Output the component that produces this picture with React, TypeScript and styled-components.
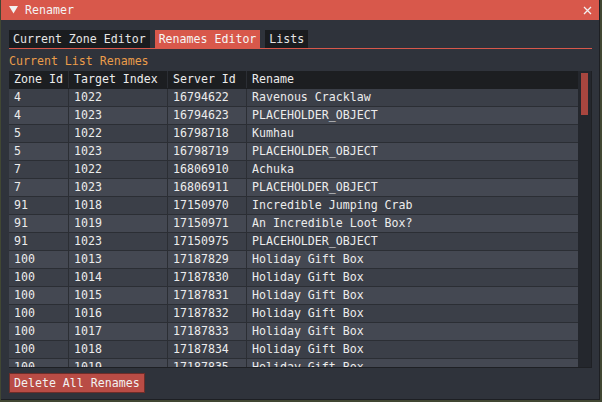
import styled, { createGlobalStyle } from 'styled-components'

const rows = [
  ['4', '1022', '16794622', 'Ravenous Cracklaw'],
  ['4', '1023', '16794623', 'PLACEHOLDER_OBJECT'],
  ['5', '1022', '16798718', 'Kumhau'],
  ['5', '1023', '16798719', 'PLACEHOLDER_OBJECT'],
  ['7', '1022', '16806910', 'Achuka'],
  ['7', '1023', '16806911', 'PLACEHOLDER_OBJECT'],
  ['91', '1018', '17150970', 'Incredible Jumping Crab'],
  ['91', '1019', '17150971', 'An Incredible Loot Box?'],
  ['91', '1023', '17150975', 'PLACEHOLDER_OBJECT'],
  ['100', '1013', '17187829', 'Holiday Gift Box'],
  ['100', '1014', '17187830', 'Holiday Gift Box'],
  ['100', '1015', '17187831', 'Holiday Gift Box'],
  ['100', '1016', '17187832', 'Holiday Gift Box'],
  ['100', '1017', '17187833', 'Holiday Gift Box'],
  ['100', '1018', '17187834', 'Holiday Gift Box'],
  ['100', '1019', '17187835', 'Holiday Gift Box'],
]

const tabs = ['Current Zone Editor', 'Renames Editor', 'Lists']
const columns = ['Zone Id', 'Target Index', 'Server Id', 'Rename']

export default function App() {
  return (
    <>
      <Global />
      <Window>
        <TitleBar>
          <svg width='9' height='8' viewBox='0 0 9 8'>
            <polygon points='0,0 9,0 4.5,7.5' fill='#f2f2f2' />
          </svg>
          <span>Renamer</span>
          <svg className='close' width='9' height='9' viewBox='0 0 9 9'>
            <path d='M1 1 L8 8 M8 1 L1 8' stroke='#f2f2f2' strokeWidth='1.3' />
          </svg>
        </TitleBar>
        <Body>
          <TabBar>
            {tabs.map((t) => (
              <Tab key={t} $active={t === 'Renames Editor'}>
                {t}
              </Tab>
            ))}
          </TabBar>
          <Heading>Current List Renames</Heading>
          <TableFrame>
            <TableBody>
              <Row $header>
                {columns.map((c) => (
                  <Cell key={c}>{c}</Cell>
                ))}
              </Row>
              {rows.map((r, i) => (
                <Row key={i} $alt={i % 2 === 1}>
                  {r.map((v, j) => (
                    <Cell key={j}>{v}</Cell>
                  ))}
                </Row>
              ))}
            </TableBody>
            <ScrollTrack>
              <ScrollGrab />
            </ScrollTrack>
          </TableFrame>
          <Button>Delete All Renames</Button>
        </Body>
      </Window>
    </>
  )
}

const Global = createGlobalStyle`
  html, body {
    margin: 0;
    padding: 0;
    background: #414733;
    width: 602px;
    height: 402px;
    overflow: hidden;
  }
  * {
    box-sizing: border-box;
  }
`

const Window = styled.div`
  margin-left: 1px;
  width: 599px;
  height: 400px;
  background: #2f333b;
  border-right: 1px solid #1d1f23;
  border-bottom: 1px solid #1d1f23;
  font-family: 'DejaVu Sans Mono', 'Liberation Mono', monospace;
  font-size: 11.6px;
  color: #ececec;
  display: flex;
  flex-direction: column;
`

const TitleBar = styled.div`
  height: 20px;
  background: #d8584b;
  display: flex;
  align-items: center;
  padding: 0 7px 0 8px;
  svg {
    flex: none;
  }
  span {
    margin-left: 7px;
    line-height: 20px;
    color: #f4f4f4;
  }
  .close {
    margin-left: auto;
  }
`

const Body = styled.div`
  flex: 1;
  padding: 10px 7px 0 8px;
  display: flex;
  flex-direction: column;
`

const TabBar = styled.div`
  display: flex;
  gap: 5px;
  border-bottom: 1px solid #d8584b;
`

const Tab = styled.div<{ $active?: boolean }>`
  height: 18px;
  line-height: 18px;
  padding: 0 4px;
  white-space: nowrap;
  background: ${(p) => (p.$active ? '#d8584b' : '#1a1c1f')};
  color: ${(p) => (p.$active ? '#f6f6f6' : '#e6e6e6')};
`

const Heading = styled.div`
  margin-top: 3px;
  height: 18px;
  line-height: 18px;
  color: #eb9d4a;
`

const TableFrame = styled.div`
  margin-top: 1px;
  height: 297px;
  display: flex;
  border-bottom: 1px solid #1e2024;
`

const TableBody = styled.div`
  flex: 1;
  overflow: hidden;
`

const Row = styled.div<{ $header?: boolean; $alt?: boolean }>`
  display: grid;
  grid-template-columns: 59px 99px 79px 1fr;
  height: 18px;
  line-height: 17px;
  border-bottom: 1px solid ${(p) => (p.$header ? '#1c1e21' : '#2b2e34')};
  background: ${(p) => (p.$header ? '#1c1e21' : p.$alt ? '#444852' : '#3b3f48')};
`

const Cell = styled.div`
  padding-left: 5px;
  white-space: nowrap;
  overflow: hidden;
  border-left: 1px solid #2b2e34;
  &:first-child {
    border-left: none;
  }
`

const ScrollTrack = styled.div`
  width: 14px;
  flex: none;
  background: #24272d;
  padding: 2px 3px;
  border-right: 1px solid #1e2024;
`

const ScrollGrab = styled.div`
  height: 42px;
  background: #a8463f;
`

const Button = styled.div`
  margin-top: 5px;
  align-self: flex-start;
  height: 20px;
  line-height: 18px;
  padding: 0 4px;
  background: #b94c45;
  border: 1px solid #6e2d29;
  color: #f2f2f2;
  white-space: nowrap;
`
